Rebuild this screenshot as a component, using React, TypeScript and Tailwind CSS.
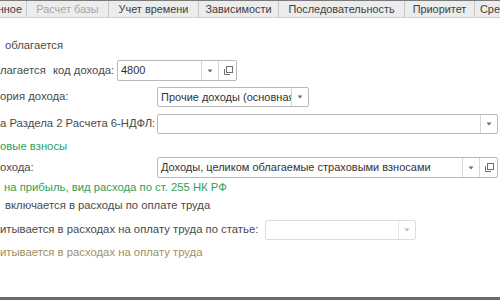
import React from 'react'

const tabs = [
  { label: 'нное', w: 'w-[27px]', muted: false, align: 'justify-end pr-[4px]' },
  { label: 'Расчет базы', w: 'w-[82px]', muted: true, align: 'justify-center' },
  { label: 'Учет времени', w: 'w-[90px]', muted: false, align: 'justify-center' },
  { label: 'Зависимости', w: 'w-[80px]', muted: false, align: 'justify-center' },
  { label: 'Последовательность', w: 'w-[126px]', muted: false, align: 'justify-center' },
  { label: 'Приоритет', w: 'w-[70px]', muted: false, align: 'justify-center' },
  { label: 'Сре', w: 'w-[40px]', muted: false, align: 'justify-start pl-[5px]' },
]

function DropArrow({ light }: { light?: boolean }) {
  return (
    <svg width="6" height="4" viewBox="0 0 6 4">
      <path d="M0.5 0.5 H5.5 L3 3.5 Z" fill={light ? '#b8b8b8' : '#6e6e6e'} />
    </svg>
  )
}

function OpenIcon() {
  return (
    <svg width="10" height="10" viewBox="0 0 10 10" fill="none" stroke="#6e6e6e" strokeWidth="1">
      <rect x="3.5" y="0.5" width="6" height="6" />
      <path d="M1.5 3 V8.5 H7" />
    </svg>
  )
}

function Field({
  width,
  height = 'h-[21px]',
  value,
  open,
  disabled,
}: {
  width: string
  height?: string
  value?: string
  open?: boolean
  disabled?: boolean
}) {
  return (
    <div
      className={`${width} ${height} flex shrink-0 rounded-[2px] border bg-white ${
        disabled ? 'border-[#dcdcdc]' : 'border-[#b9b9b9]'
      }`}
    >
      <div className="flex-1 min-w-0 overflow-hidden whitespace-nowrap px-[3px] flex items-center text-[#333333] text-[11px]">
        {value}
      </div>
      <div
        className={`w-[17px] flex items-center justify-center border-l ${
          disabled ? 'border-[#e6e6e6]' : 'border-[#d6d6d6]'
        }`}
      >
        <DropArrow light={disabled} />
      </div>
      {open && (
        <div className="w-[18px] flex items-center justify-center border-l border-[#d6d6d6]">
          <OpenIcon />
        </div>
      )}
    </div>
  )
}

export default function App() {
  return (
    <div className="w-[500px] h-[300px] overflow-hidden bg-white flex flex-col text-[11.3px] leading-none whitespace-nowrap text-[#4a4a4a] font-['Liberation_Sans',Arial,sans-serif]">
      {/* Tabs */}
      <div className="h-[18px] shrink-0 flex bg-[#ececec] border-t border-[#7a7a7a] border-b border-b-[#cfcfcf] text-[10.9px]">
        {tabs.map((t) => (
          <div
            key={t.label}
            className={`${t.w} shrink-0 flex items-center ${t.align} border-r border-[#c6c6c6] overflow-hidden ${
              t.muted ? 'text-[#a8a8a8]' : 'text-[#404040]'
            }`}
          >
            {t.label}
          </div>
        ))}
      </div>

      {/* Content */}
      <div className="flex-1 flex flex-col">
        <div className="mt-[20px] h-[16px] flex items-center pl-[5px]">облагается</div>

        <div className="mt-[6px] h-[21px] flex items-center">
          <span className="w-[53px]">лагается</span>
          <span className="w-[64px]">код дохода:</span>
          <Field width="w-[120px]" value="4800" open />
        </div>

        <div className="mt-[6px] h-[20px] flex items-center">
          <span className="w-[157px]">ория дохода:</span>
          <Field width="w-[152px]" height="h-[20px]" value="Прочие доходы (основная)" />
        </div>

        <div className="mt-[7px] h-[20px] flex items-center">
          <span className="w-[157px]">а Раздела 2 Расчета 6-НДФЛ:</span>
          <Field width="w-[341px]" height="h-[20px]" />
        </div>

        <div className="mt-[5px] h-[16px] flex items-center text-[#2ea05a]">овые взносы</div>

        <div className="mt-[2px] h-[21px] flex items-center">
          <span className="w-[157px]">охода:</span>
          <Field width="w-[341px]" value="Доходы, целиком облагаемые страховыми взносами" open />
        </div>

        <div className="mt-[2px] h-[16px] flex items-center pl-[4px] text-[#2ea05a]">
          на прибыль, вид расхода по ст. 255 НК РФ
        </div>

        <div className="mt-[2px] h-[16px] flex items-center pl-[5px]">
          включается в расходы по оплате труда
        </div>

        <div className="mt-[6px] h-[20px] flex items-center">
          <span className="w-[265px]">итывается в расходах на оплату труда по статье:</span>
          <Field width="w-[151px]" height="h-[20px]" disabled />
        </div>

        <div className="mt-[5px] h-[16px] flex items-center text-[#a08e63]">
          итывается в расходах на оплату труда
        </div>
      </div>

      <div className="h-[3px] shrink-0 bg-[#6a6a6a]" />
    </div>
  )
}
